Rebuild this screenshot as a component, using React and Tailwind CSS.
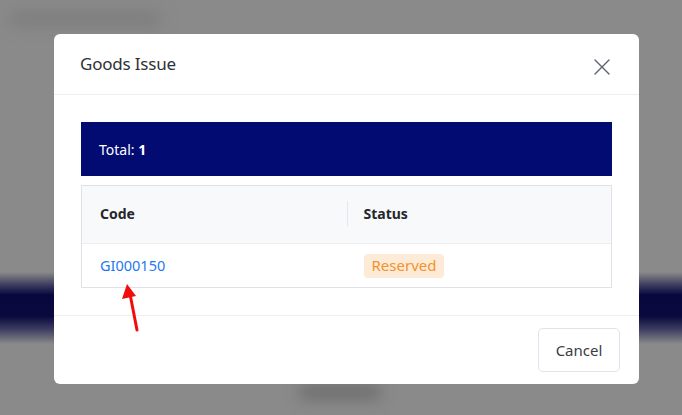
import { X } from "lucide-react";

function Backdrop(){
    return(
        <div className="absolute inset-0 bg-[#8a8a8a] overflow-hidden">
            <div className="absolute left-[10px] top-[12px] w-[150px] h-[14px] bg-[#7b7c7b] blur-[8px] rounded"></div>
            <div className="absolute left-0 right-0 top-[272px] h-[72px] bg-[linear-gradient(to_bottom,#8a8a8a_0%,#3c3c60_18%,#07073f_32%,#0a0a3e_62%,#3e3e62_80%,#8a8a8a_100%)]"></div>
            <div className="absolute left-[300px] top-[386px] w-[80px] h-[12px] bg-[#666666] blur-[8px]"></div>
        </div>
    )
}

function Arrow(){
    return(
        <svg className="absolute left-[118px] top-[282px]" width="30" height="52" viewBox="0 0 30 52">
            <path d="M19 48 L12 12" stroke="#f20d0d" strokeWidth="3" strokeLinecap="round" fill="none"/>
            <path d="M9 2 L4 17 L18 14 Z" fill="#f20d0d"/>
        </svg>
    )
}

export default function App(){
    return(
        <div className="relative w-[682px] h-[415px] overflow-hidden" style={{fontFamily:'"Noto Sans", "Open Sans", sans-serif'}}>
            <Backdrop/>
            <div className="absolute left-[54px] top-[34px] w-[585px] h-[350px] bg-white rounded-md flex flex-col">
                <div className="h-[61px] flex items-center justify-between pl-[26px] pr-[23px] border-b border-[#eceef1]">
                    <div className="text-[17px] text-[#2f3136] tracking-[-0.2px]">Goods Issue</div>
                    <X size={28} strokeWidth={1.2} className="text-[#5a616f] mt-[5px]"/>
                </div>
                <div className="flex-1 px-[27px] pt-[27px]">
                    <div className="h-[54px] bg-[#020b72] flex items-center px-[18px] text-white text-[14px]">
                        Total:&nbsp;<span className="font-bold">1</span>
                    </div>
                    <div className="mt-[9px] border border-[#dfe1e5]">
                        <div className="h-[58px] bg-[#f8f9fb] grid grid-cols-2 border-b border-[#eceef1] text-[14px] font-bold text-[#25272b]">
                            <div className="flex items-center pl-[18px] pb-[2px]">Code</div>
                            <div className="flex items-center pl-[17px] pb-[2px] relative">
                                <div className="absolute left-0 top-[15px] h-[25px] w-px bg-[#e4e6ea]"></div>
                                Status
                            </div>
                        </div>
                        <div className="h-[43px] grid grid-cols-2 text-[14.5px]">
                            <div className="flex items-center pl-[18px] text-[#1f78f0]">GI000150</div>
                            <div className="flex items-center pl-[17px]">
                                <span className="px-[8px] h-[24px] flex items-center rounded bg-[#fdebd8] text-[#f4922c] text-[15px]">Reserved</span>
                            </div>
                        </div>
                    </div>
                </div>
                <div className="h-[69px] border-t border-[#eceef1] flex items-center justify-end pr-[19px]">
                    <button className="w-[82px] h-[44px] border border-[#dfe3ec] rounded-[5px] text-[15px] text-[#3a3d44] bg-white">Cancel</button>
                </div>
            </div>
            <Arrow/>
        </div>
    )
}
